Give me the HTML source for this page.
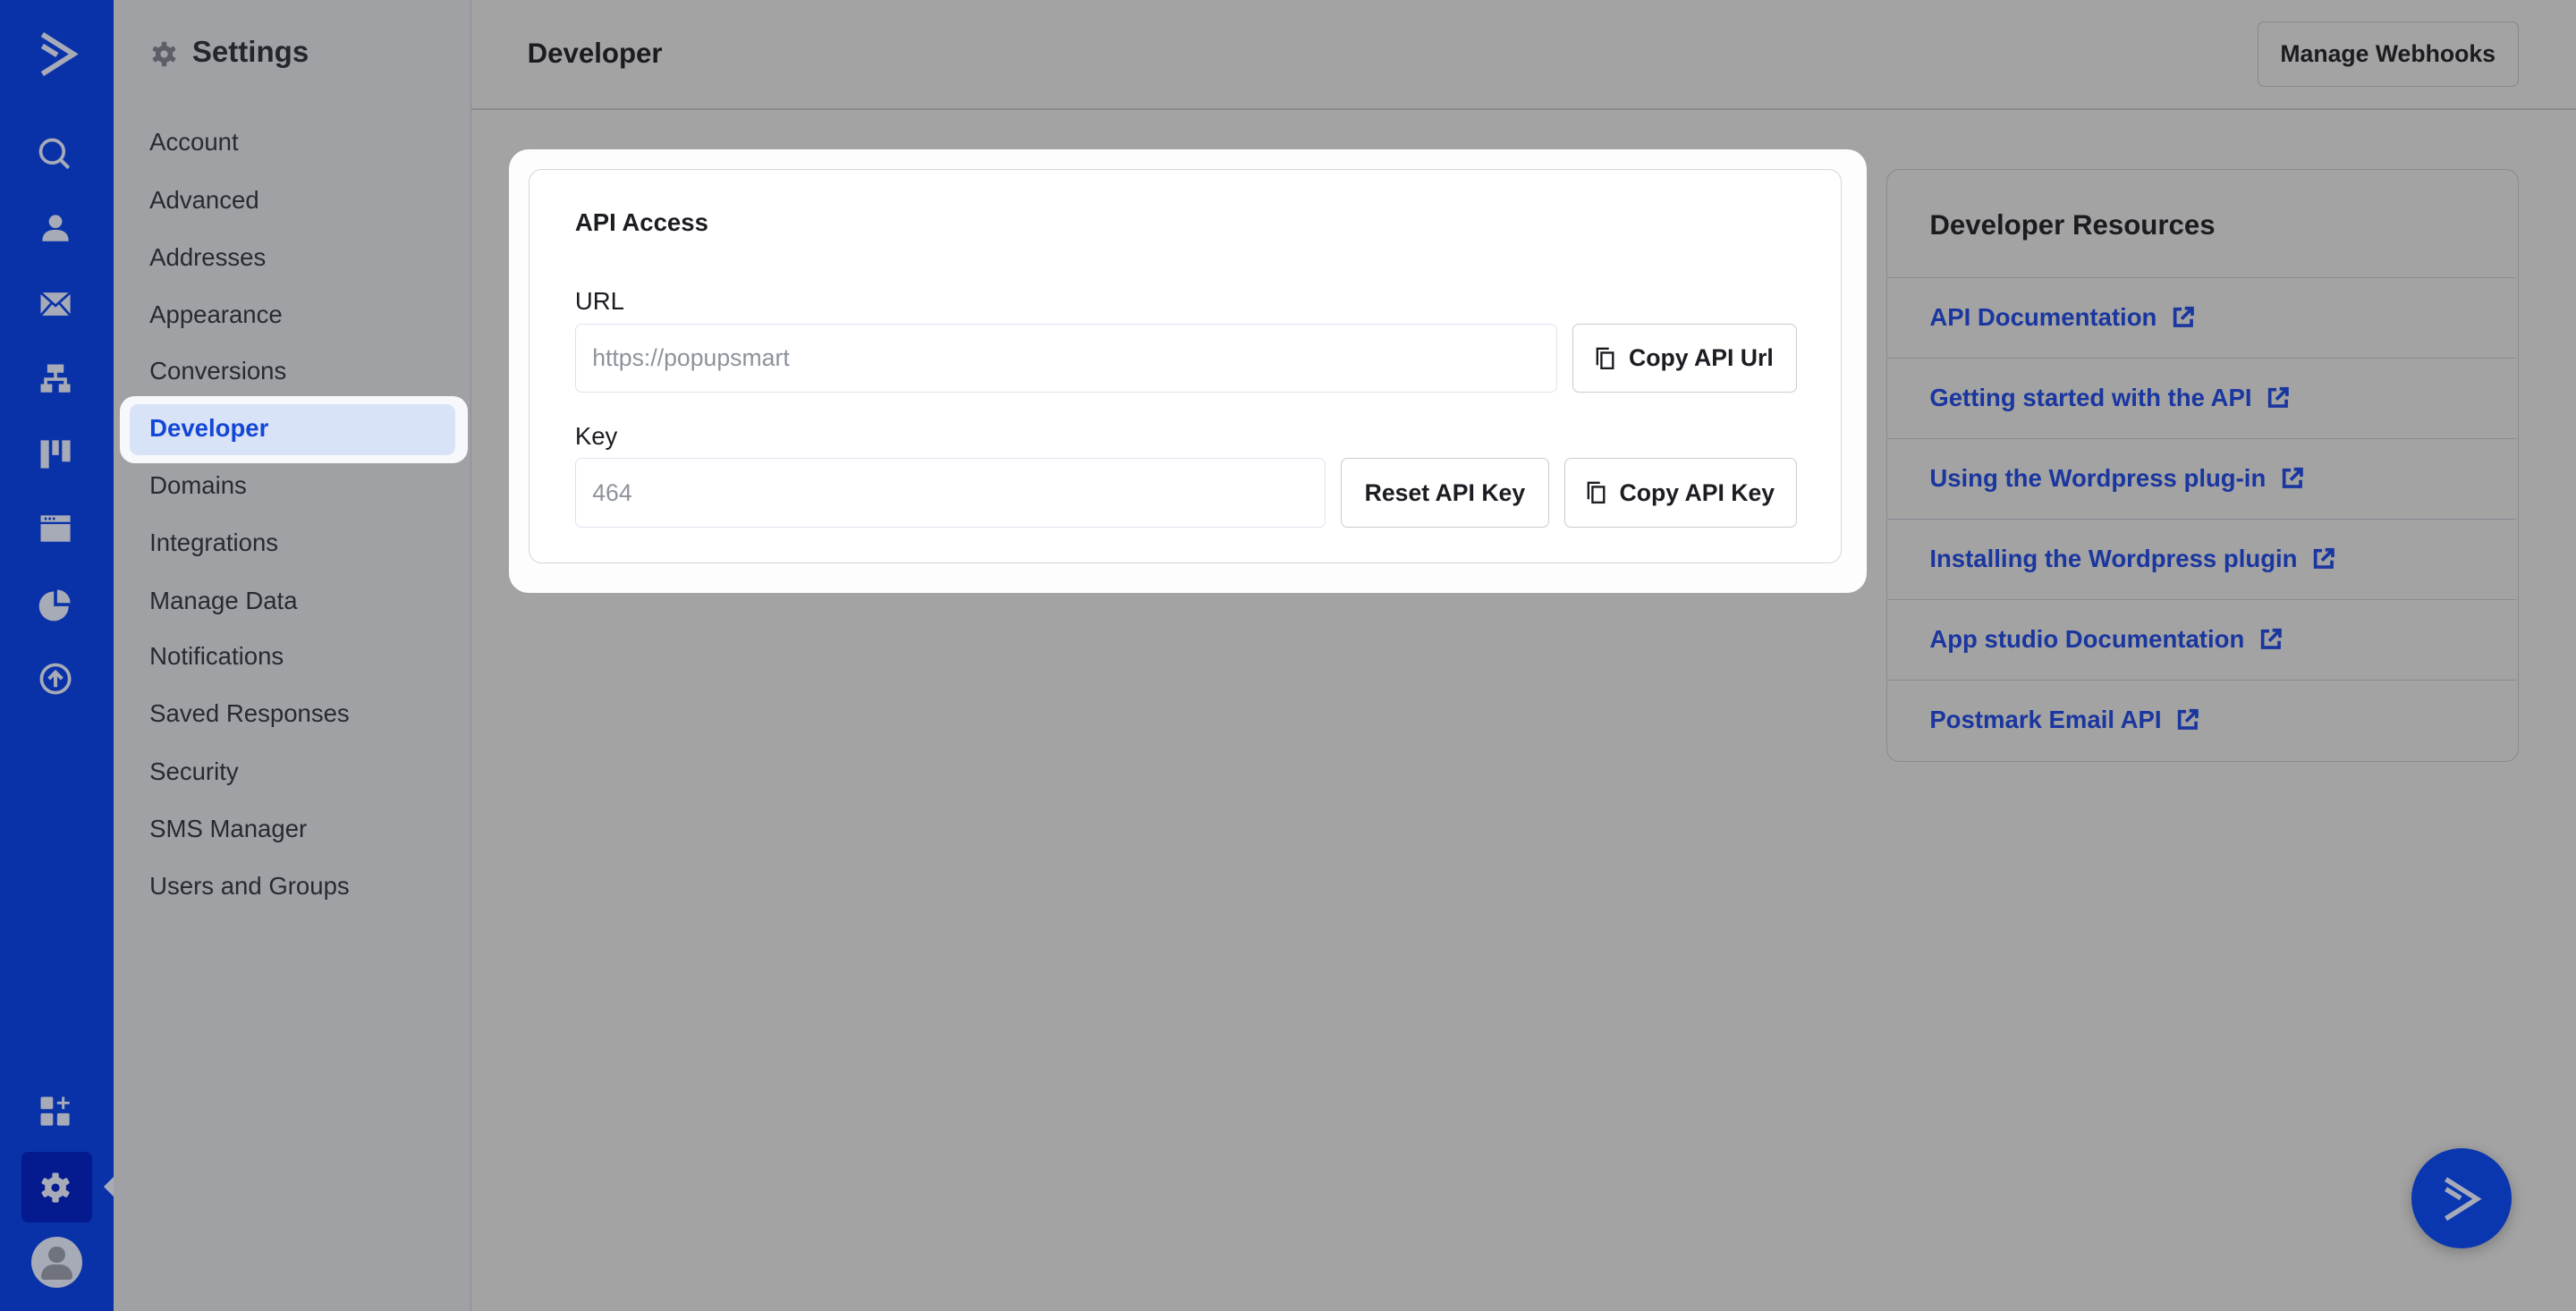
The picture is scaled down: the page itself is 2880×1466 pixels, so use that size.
<!DOCTYPE html>
<html><head><meta charset="utf-8">
<style>
*{box-sizing:border-box;margin:0;padding:0}
html,body{width:2880px;height:1466px;overflow:hidden;background:#a3a3a3}
#root{zoom:1.83673;width:1568px;height:798px;position:relative;font-family:"Liberation Sans",sans-serif;background:#a3a3a3}
.abs{position:absolute}
.rail{left:0;top:0;width:69px;height:798px;background:#0a32a8}
.ic{position:absolute;left:22px;width:24px;height:24px}
.panel{left:69px;top:0;width:218px;height:798px;background:#a0a1a5;border-right:1px solid #8c8e93}
.nav{position:absolute;left:22px;font-size:15px;color:#272a30}
.main-line{left:287px;top:66px;width:1281px;height:1px;background:#8b8a90}
.btn{position:absolute;background:#fff;border:1px solid #c8ccd4;border-radius:4px;font-size:14.5px;font-weight:bold;color:#1b1d22;display:flex;align-items:center;justify-content:center;gap:8px}
.inp{position:absolute;background:#fff;border:1px solid #dde3ee;border-radius:4px;font-size:14.5px;color:#8d929c;padding-left:10px;display:flex;align-items:center}
.lab{position:absolute;left:350px;font-size:15px;color:#1b1d22}
.res{left:1148px;top:103px;width:385px;height:361px;border:1px solid #878b94;border-radius:8px}
.row{position:absolute;left:0;width:383px;height:49px;border-top:1px solid #878b94;display:flex;align-items:center;padding-left:26px;font-size:15px;font-weight:bold;color:#1a369f}
.row svg{margin-left:9px}
</style></head><body><div id="root">
<div class="abs rail">
  <svg class="ic" style="top:18px;left:22px;width:28px;height:30px" viewBox="0 0 28 30"><path d="M4 3 L23 15 L4 27" stroke="#a7abb8" stroke-width="3.2" fill="none" stroke-linejoin="miter"/><path d="M4 10 L13 15.5" stroke="#a7abb8" stroke-width="3.2"/></svg>
  <svg class="ic" style="top:82px" viewBox="0 0 24 24"><circle cx="10" cy="10" r="7" fill="none" stroke="#a7abb8" stroke-width="2"/><path d="M15 15 L20 20" stroke="#a7abb8" stroke-width="2.2"/></svg>
  <svg class="ic" style="top:127px" viewBox="0 0 24 24"><circle cx="12" cy="8" r="4" fill="#a7abb8"/><path d="M4 20 Q4 13 12 13 Q20 13 20 20Z" fill="#a7abb8"/></svg>
  <svg class="ic" style="top:173px" viewBox="0 0 24 24"><rect x="3" y="5" width="18" height="14" fill="#a7abb8"/><path d="M3 5 L12 13 L21 5 M3 19 L10 11 M21 19 L14 11" stroke="#0a32a8" stroke-width="1.5" fill="none"/></svg>
  <svg class="ic" style="top:219px" viewBox="0 0 24 24"><path d="M7 3h10v5H7z M11 8h2v4h-2z M5 11h14v2H5z M5 12h2v3H5z M17 12h2v3h-2z M3 15h7v5H3z M14 15h7v5h-7z" fill="#a7abb8"/></svg>
  <svg class="ic" style="top:264px" viewBox="0 0 24 24"><path d="M3 4h5v17H3z M10 4h4v9h-4z M16 4h5v13h-5z" fill="#a7abb8"/></svg>
  <svg class="ic" style="top:310px" viewBox="0 0 24 24"><rect x="3" y="4" width="18" height="16" fill="#a7abb8"/><rect x="3" y="8" width="18" height="1.3" fill="#0a32a8"/><circle cx="6" cy="6" r=".8" fill="#0a32a8"/><circle cx="8.5" cy="6" r=".8" fill="#0a32a8"/><circle cx="11" cy="6" r=".8" fill="#0a32a8"/></svg>
  <svg class="ic" style="top:356px" viewBox="0 0 24 24"><path d="M11 4 A9 9 0 1 0 20 13 L11 13Z" fill="#a7abb8"/><path d="M13 3 A8 8 0 0 1 21 11 L13 11Z" fill="#a7abb8"/></svg>
  <svg class="ic" style="top:401px" viewBox="0 0 24 24"><circle cx="12" cy="12" r="8.5" fill="none" stroke="#a7abb8" stroke-width="2"/><path d="M12 17 V8 M8 12 L12 8 L16 12" stroke="#a7abb8" stroke-width="2.2" fill="none"/></svg>
  <svg class="ic" style="top:665px" viewBox="0 0 24 24"><rect x="3" y="3" width="7.5" height="7.5" rx="1" fill="#a7abb8"/><rect x="3" y="13" width="7.5" height="7.5" rx="1" fill="#a7abb8"/><rect x="13" y="13" width="7.5" height="7.5" rx="1" fill="#a7abb8"/><path d="M16.7 3v7.5 M13 6.7h7.5" stroke="#a7abb8" stroke-width="1.6"/></svg>
  <div class="abs" style="left:13px;top:701px;width:43px;height:43px;background:#061a90;border-radius:4px"></div>
  <svg class="ic" style="top:711px" viewBox="0 0 24 24"><g fill="#a7abb8"><circle cx="12" cy="12" r="6.5"/><rect x="10" y="3" width="4" height="18" rx="1"/><rect x="10" y="3" width="4" height="18" rx="1" transform="rotate(60 12 12)"/><rect x="10" y="3" width="4" height="18" rx="1" transform="rotate(120 12 12)"/></g><circle cx="12" cy="12" r="2.5" fill="#061a90"/></svg>
  <div class="abs" style="left:63px;top:716px;width:0;height:0;border-top:7px solid transparent;border-bottom:7px solid transparent;border-right:7px solid #a7abb8"></div>
  <div class="abs" style="left:19px;top:753px;width:31px;height:31px;border-radius:50%;background:#a7abb8;overflow:hidden">
    <div class="abs" style="left:10.5px;top:6px;width:10px;height:10px;border-radius:50%;background:#70737c"></div>
    <div class="abs" style="left:6px;top:17px;width:19px;height:9px;border-radius:8px 8px 2px 2px;background:#70737c"></div>
  </div>
</div>
<div class="abs panel">
  <svg class="abs" style="left:22px;top:24px" width="18" height="18" viewBox="0 0 24 24"><g fill="#5c5f68"><circle cx="12" cy="12" r="7"/><rect x="10" y="2" width="4" height="20" rx="1"/><rect x="10" y="2" width="4" height="20" rx="1" transform="rotate(60 12 12)"/><rect x="10" y="2" width="4" height="20" rx="1" transform="rotate(120 12 12)"/></g><circle cx="12" cy="12" r="3" fill="#a0a1a5"/></svg>
  <div class="abs" style="left:48px;top:22px;font-size:18px;font-weight:bold;color:#24262c">Settings</div>
  <div class="nav" style="top:78px">Account</div>
  <div class="nav" style="top:113px">Advanced</div>
  <div class="nav" style="top:148px">Addresses</div>
  <div class="nav" style="top:183px">Appearance</div>
  <div class="nav" style="top:217px">Conversions</div>
  <div class="abs" style="left:4px;top:241px;width:212px;height:41px;background:#f7f8fc;border-radius:9px"></div>
  <div class="abs" style="left:10px;top:246px;width:198px;height:31px;background:#d9e3f7;border-radius:5px"></div>
  <div class="nav" style="top:252px;color:#1447d6;font-weight:bold">Developer</div>
  <div class="nav" style="top:287px">Domains</div>
  <div class="nav" style="top:322px">Integrations</div>
  <div class="nav" style="top:357px">Manage Data</div>
  <div class="nav" style="top:391px">Notifications</div>
  <div class="nav" style="top:426px">Saved Responses</div>
  <div class="nav" style="top:461px">Security</div>
  <div class="nav" style="top:496px">SMS Manager</div>
  <div class="nav" style="top:531px">Users and Groups</div>
</div>
<div class="abs" style="left:321px;top:23px;font-size:17px;font-weight:bold;color:#1b1c20">Developer</div>
<div class="abs" style="left:1374px;top:13px;width:159px;height:40px;border:1px solid #85888f;border-radius:4px;font-size:14.5px;font-weight:bold;color:#1b1c20;display:flex;align-items:center;justify-content:center">Manage Webhooks</div>
<div class="abs main-line"></div>
<div class="abs" style="left:310px;top:91px;width:826px;height:270px;background:#fdfdfd;border-radius:12px"></div>
<div class="abs" style="left:322px;top:103px;width:799px;height:240px;background:#fff;border:1px solid #d2d6de;border-radius:8px"></div>
<div class="lab" style="top:127px;font-weight:bold">API Access</div>
<div class="lab" style="top:175px">URL</div>
<div class="inp" style="left:350px;top:197px;width:598px;height:42px">https://popupsmart</div>
<div class="btn" style="left:957px;top:197px;width:137px;height:42px"><svg width="12" height="14" viewBox="0 0 12 14"><path d="M1 11V1h7" stroke="#1b1d22" stroke-width="1.3" fill="none"/><rect x="3.5" y="3.5" width="7" height="9.5" stroke="#1b1d22" stroke-width="1.3" fill="none"/></svg>Copy API Url</div>
<div class="lab" style="top:257px">Key</div>
<div class="inp" style="left:350px;top:279px;width:457px;height:42px">464</div>
<div class="btn" style="left:816px;top:279px;width:127px;height:42px">Reset API Key</div>
<div class="btn" style="left:952px;top:279px;width:142px;height:42px"><svg width="12" height="14" viewBox="0 0 12 14"><path d="M1 11V1h7" stroke="#1b1d22" stroke-width="1.3" fill="none"/><rect x="3.5" y="3.5" width="7" height="9.5" stroke="#1b1d22" stroke-width="1.3" fill="none"/></svg>Copy API Key</div>
<div class="abs res">
  <div class="abs" style="left:26px;top:24px;font-size:17px;font-weight:bold;color:#1b1c20">Developer Resources</div>
  <div class="row" style="top:65px">API Documentation<svg width="14" height="14" viewBox="0 0 14 14"><path d="M6 2H2v10h10V8" stroke="#1a369f" stroke-width="2" fill="none"/><path d="M6 8L12 2 M8 1.5h4.5V6" stroke="#1a369f" stroke-width="2" fill="none"/></svg></div>
  <div class="row" style="top:114px">Getting started with the API<svg width="14" height="14" viewBox="0 0 14 14"><path d="M6 2H2v10h10V8" stroke="#1a369f" stroke-width="2" fill="none"/><path d="M6 8L12 2 M8 1.5h4.5V6" stroke="#1a369f" stroke-width="2" fill="none"/></svg></div>
  <div class="row" style="top:163px">Using the Wordpress plug-in<svg width="14" height="14" viewBox="0 0 14 14"><path d="M6 2H2v10h10V8" stroke="#1a369f" stroke-width="2" fill="none"/><path d="M6 8L12 2 M8 1.5h4.5V6" stroke="#1a369f" stroke-width="2" fill="none"/></svg></div>
  <div class="row" style="top:212px">Installing the Wordpress plugin<svg width="14" height="14" viewBox="0 0 14 14"><path d="M6 2H2v10h10V8" stroke="#1a369f" stroke-width="2" fill="none"/><path d="M6 8L12 2 M8 1.5h4.5V6" stroke="#1a369f" stroke-width="2" fill="none"/></svg></div>
  <div class="row" style="top:261px">App studio Documentation<svg width="14" height="14" viewBox="0 0 14 14"><path d="M6 2H2v10h10V8" stroke="#1a369f" stroke-width="2" fill="none"/><path d="M6 8L12 2 M8 1.5h4.5V6" stroke="#1a369f" stroke-width="2" fill="none"/></svg></div>
  <div class="row" style="top:310px">Postmark Email API<svg width="14" height="14" viewBox="0 0 14 14"><path d="M6 2H2v10h10V8" stroke="#1a369f" stroke-width="2" fill="none"/><path d="M6 8L12 2 M8 1.5h4.5V6" stroke="#1a369f" stroke-width="2" fill="none"/></svg></div>
</div>
<div class="abs" style="left:1468px;top:699px;width:61px;height:61px;border-radius:50%;background:#0a37b0;box-shadow:0 2px 8px rgba(0,0,0,.25)">
  <svg class="abs" style="left:18px;top:17px" width="26" height="28" viewBox="0 0 26 28"><path d="M3 2 L22 14 L3 26" stroke="#a7abb8" stroke-width="3" fill="none"/><path d="M3 8 L12 13.5" stroke="#a7abb8" stroke-width="3"/></svg>
</div>
</div></body></html>
